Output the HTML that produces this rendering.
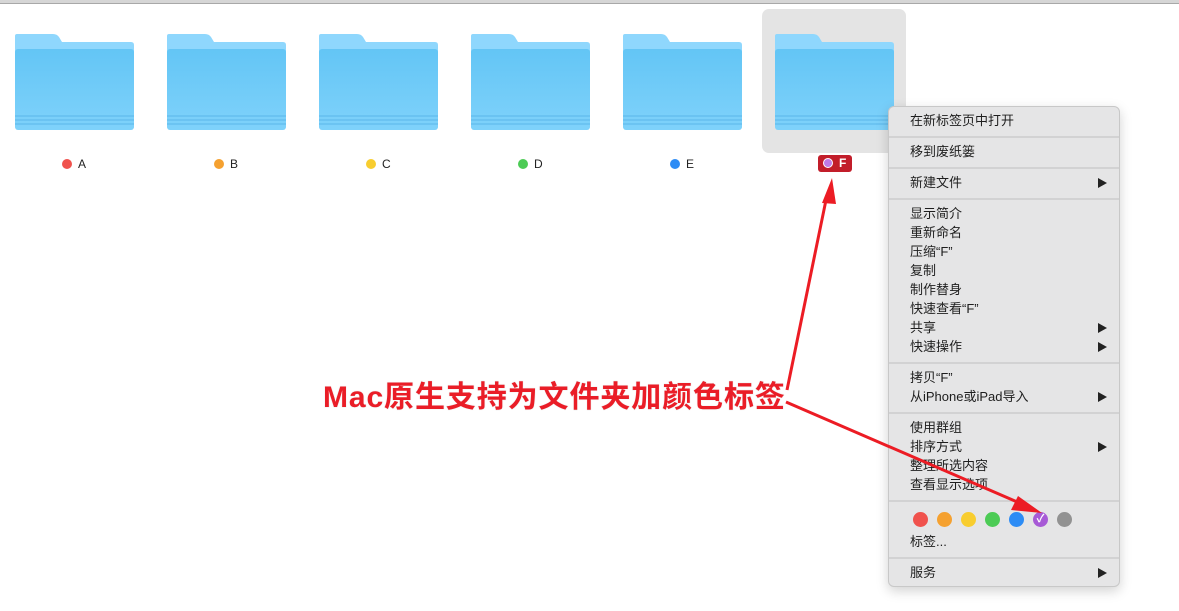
<!DOCTYPE html>
<html><head><meta charset="utf-8"><style>
*{margin:0;padding:0;box-sizing:border-box}
body{width:1179px;height:611px;background:#fff;position:relative;overflow:hidden;font-family:"Liberation Sans","Noto Sans CJK SC",sans-serif}
.top{position:absolute;left:0;top:0;width:1179px;height:4px;background:#d6d6d6;border-bottom:1px solid #a8a8a8}
.sel{position:absolute;left:762px;top:9px;width:144px;height:144px;background:#e4e4e4;border-radius:7px}
.f{position:absolute;top:34px;width:119px;height:96px}
.lab{position:absolute;top:156px;font-size:12px;color:#222;height:16px;line-height:16px}
.lab i{display:inline-block;width:10px;height:10px;border-radius:50%;vertical-align:-1px;margin-right:6px}
.menu{position:absolute;left:888px;top:106px;width:232px;height:481px;background:#e5e5e6;border:1px solid #c8c8c8;border-radius:6px;box-shadow:0 4px 12px rgba(0,0,0,.18);font-size:13px;color:#1e1e1e}
.it{position:absolute;left:21px;height:19px;line-height:19px}
.ar{position:absolute;left:209px;width:0;height:0;border-left:9px solid #222;border-top:5px solid transparent;border-bottom:5px solid transparent}
.sep{position:absolute;left:0;width:230px;height:2px;background:#d2d2d3}
.d{position:absolute;top:405px;width:15px;height:15px;border-radius:50%}
.cap{position:absolute;left:323px;top:372px;font-size:30px;font-weight:bold;color:#ea1d27;letter-spacing:0.9px;white-space:nowrap;text-shadow:0 0 2px #fff,0 0 3px #fff,0 0 1px #888}
</style></head><body>
<div class="top"></div>
<div class="sel"></div>

<svg width="0" height="0" style="position:absolute"><defs>
<linearGradient id="g" x1="0" y1="0" x2="0" y2="1"><stop offset="0" stop-color="#63c5f5"/><stop offset="1" stop-color="#7fd2fb"/></linearGradient>
</defs></svg>

<svg class="f" style="left:15px" viewBox="0 0 119 96"><path d="M2 0H38Q42 0 44 3L47 8H116Q119 8 119 11V20H0V2Q0 0 2 0Z" fill="#8fd7fd"/><rect x="0" y="15" width="119" height="81" rx="3" fill="url(#g)"/><path d="M0 82H119M0 86H119M0 90H119" stroke="#5ab6ea" stroke-width="1"/></svg>
<svg class="f" style="left:167px" viewBox="0 0 119 96"><path d="M2 0H38Q42 0 44 3L47 8H116Q119 8 119 11V20H0V2Q0 0 2 0Z" fill="#8fd7fd"/><rect x="0" y="15" width="119" height="81" rx="3" fill="url(#g)"/><path d="M0 82H119M0 86H119M0 90H119" stroke="#5ab6ea" stroke-width="1"/></svg>
<svg class="f" style="left:319px" viewBox="0 0 119 96"><path d="M2 0H38Q42 0 44 3L47 8H116Q119 8 119 11V20H0V2Q0 0 2 0Z" fill="#8fd7fd"/><rect x="0" y="15" width="119" height="81" rx="3" fill="url(#g)"/><path d="M0 82H119M0 86H119M0 90H119" stroke="#5ab6ea" stroke-width="1"/></svg>
<svg class="f" style="left:471px" viewBox="0 0 119 96"><path d="M2 0H38Q42 0 44 3L47 8H116Q119 8 119 11V20H0V2Q0 0 2 0Z" fill="#8fd7fd"/><rect x="0" y="15" width="119" height="81" rx="3" fill="url(#g)"/><path d="M0 82H119M0 86H119M0 90H119" stroke="#5ab6ea" stroke-width="1"/></svg>
<svg class="f" style="left:623px" viewBox="0 0 119 96"><path d="M2 0H38Q42 0 44 3L47 8H116Q119 8 119 11V20H0V2Q0 0 2 0Z" fill="#8fd7fd"/><rect x="0" y="15" width="119" height="81" rx="3" fill="url(#g)"/><path d="M0 82H119M0 86H119M0 90H119" stroke="#5ab6ea" stroke-width="1"/></svg>
<svg class="f" style="left:775px" viewBox="0 0 119 96"><path d="M2 0H38Q42 0 44 3L47 8H116Q119 8 119 11V20H0V2Q0 0 2 0Z" fill="#8fd7fd"/><rect x="0" y="15" width="119" height="81" rx="3" fill="url(#g)"/><path d="M0 82H119M0 86H119M0 90H119" stroke="#5ab6ea" stroke-width="1"/></svg>

<div class="lab" style="left:62px"><i style="background:#f0524d"></i>A</div>
<div class="lab" style="left:214px"><i style="background:#f5a130"></i>B</div>
<div class="lab" style="left:366px"><i style="background:#f8cd2f"></i>C</div>
<div class="lab" style="left:518px"><i style="background:#4ccb55"></i>D</div>
<div class="lab" style="left:670px"><i style="background:#2d8cf5"></i>E</div>
<div class="lab" style="left:818px;top:155px;background:#c21d2a;color:#fff;border-radius:3px;padding:0 6px 0 5px;height:17px;line-height:17px;font-weight:bold"><i style="background:#c07ae6;border:1px solid #fff"></i>F</div>

<div class="menu">
<div class="it" style="top:4px">在新标签页中打开</div>
<div class="sep" style="top:29px"></div>
<div class="it" style="top:35px">移到废纸篓</div>
<div class="sep" style="top:60px"></div>
<div class="it" style="top:66px">新建文件</div><div class="ar" style="top:71px"></div>
<div class="sep" style="top:91px"></div>
<div class="it" style="top:97px">显示简介</div>
<div class="it" style="top:116px">重新命名</div>
<div class="it" style="top:135px">压缩“F”</div>
<div class="it" style="top:154px">复制</div>
<div class="it" style="top:173px">制作替身</div>
<div class="it" style="top:192px">快速查看“F”</div>
<div class="it" style="top:211px">共享</div><div class="ar" style="top:216px"></div>
<div class="it" style="top:230px">快速操作</div><div class="ar" style="top:235px"></div>
<div class="sep" style="top:255px"></div>
<div class="it" style="top:261px">拷贝“F”</div>
<div class="it" style="top:280px">从iPhone或iPad导入</div><div class="ar" style="top:285px"></div>
<div class="sep" style="top:305px"></div>
<div class="it" style="top:311px">使用群组</div>
<div class="it" style="top:330px">排序方式</div><div class="ar" style="top:335px"></div>
<div class="it" style="top:349px">整理所选内容</div>
<div class="it" style="top:368px">查看显示选项</div>
<div class="sep" style="top:393px"></div>
<div class="d" style="left:24px;background:#f0524d"></div>
<div class="d" style="left:48px;background:#f5a130"></div>
<div class="d" style="left:72px;background:#f8cd2f"></div>
<div class="d" style="left:96px;background:#4ccb55"></div>
<div class="d" style="left:120px;background:#2d8cf5"></div>
<div class="d" style="left:144px;background:#a75ad6;color:#fff;font-size:11px;line-height:15px;text-align:center;font-weight:bold">✓</div>
<div class="d" style="left:168px;background:#929292"></div>
<div class="it" style="top:425px">标签...</div>
<div class="sep" style="top:450px"></div>
<div class="it" style="top:456px">服务</div><div class="ar" style="top:461px"></div>
</div>

<div class="cap">Mac原生支持为文件夹加颜色标签</div>

<svg style="position:absolute;left:0;top:0" width="1179" height="611">
<line x1="787" y1="390" x2="826" y2="200" stroke="#ec1c24" stroke-width="3"/>
<polygon points="832,178 822,203 836,204" fill="#ec1c24"/>
<line x1="786" y1="402" x2="1022" y2="504" stroke="#ec1c24" stroke-width="3"/>
<polygon points="1042,513 1018,496 1011,510" fill="#ec1c24"/>
</svg>
</body></html>
